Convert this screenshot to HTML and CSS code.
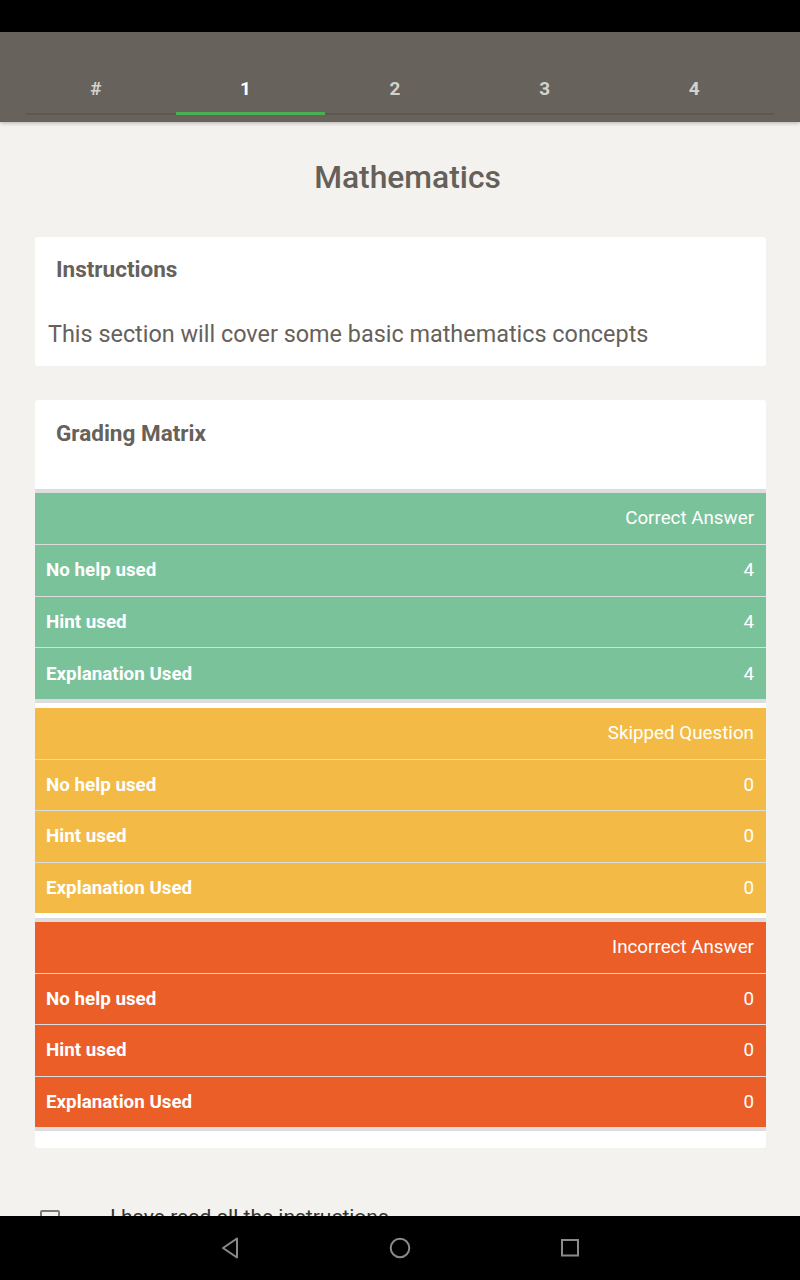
FILE: index.html
```html
<!DOCTYPE html>
<html>
<head>
<meta charset="utf-8">
<link rel="stylesheet" href="styles.css">
</head>
<body>
<div class="screen">
  <div class="statusbar"></div>
  <div class="header">
    <div class="tabs">
      <div class="tab"><span>#</span></div>
      <div class="tab active"><span>1</span></div>
      <div class="tab"><span>2</span></div>
      <div class="tab"><span>3</span></div>
      <div class="tab"><span>4</span></div>
    </div>
  </div>
  <div class="main">
    <h1 class="title">Mathematics</h1>
    <div class="card instructions">
      <h2 class="card-title">Instructions</h2>
      <p class="card-body">This section will cover some basic mathematics concepts</p>
    </div>
    <div class="card grading">
      <h2 class="card-title">Grading Matrix</h2>
      <div class="sep gray"></div>
      <div class="sec green">
        <div class="row head"><span class="val">Correct Answer</span></div>
        <div class="row"><span class="lbl">No help used</span><span class="val">4</span></div>
        <div class="row"><span class="lbl">Hint used</span><span class="val">4</span></div>
        <div class="row"><span class="lbl">Explanation Used</span><span class="val">4</span></div>
      </div>
      <div class="sep gray"></div>
      <div class="sep white"></div>
      <div class="sec yellow">
        <div class="row head"><span class="val">Skipped Question</span></div>
        <div class="row"><span class="lbl">No help used</span><span class="val">0</span></div>
        <div class="row"><span class="lbl">Hint used</span><span class="val">0</span></div>
        <div class="row"><span class="lbl">Explanation Used</span><span class="val">0</span></div>
      </div>
      <div class="sep white"></div>
      <div class="sep gray"></div>
      <div class="sec orange">
        <div class="row head"><span class="val">Incorrect Answer</span></div>
        <div class="row"><span class="lbl">No help used</span><span class="val">0</span></div>
        <div class="row"><span class="lbl">Hint used</span><span class="val">0</span></div>
        <div class="row"><span class="lbl">Explanation Used</span><span class="val">0</span></div>
      </div>
      <div class="sep gray"></div>
      <div class="card-foot"></div>
    </div>
    <label class="agree">
      <span class="box"></span>
      <span class="agree-text">I have read all the instructions</span>
    </label>
  </div>
  <div class="navbar">
    <svg class="nav-icon" width="20" height="22" viewBox="0 0 20 22"><path d="M17 1.5 L3 11 L17 20.5 Z" fill="none" stroke="#8a8a8a" stroke-width="2" stroke-linejoin="round"/></svg>
    <svg class="nav-icon" width="22" height="22" viewBox="0 0 22 22"><circle cx="11" cy="11" r="9.3" fill="none" stroke="#8a8a8a" stroke-width="2"/></svg>
    <svg class="nav-icon" width="20" height="20" viewBox="0 0 20 20"><rect x="2" y="2" width="16" height="15.5" fill="none" stroke="#8a8a8a" stroke-width="2"/></svg>
  </div>
</div>
</body>
</html>
```
FILE: styles.css
```css
* { box-sizing: border-box; }
html, body { margin: 0; padding: 0; }
body {
  font-family: Roboto, "Noto Sans", sans-serif;
  background: #000;
}
.screen {
  width: 800px;
  height: 1280px;
  display: flex;
  flex-direction: column;
  overflow: hidden;
  background: #f3f2ee;
}
.statusbar {
  height: 32px;
  flex: none;
  background: #000;
}
.header {
  height: 90px;
  flex: none;
  background: #67625b;
  padding: 15px 24px 0 26px;
  position: relative;
  z-index: 2;
  box-shadow: 0 1px 4px rgba(0,0,0,0.28);
}
.tabs {
  display: flex;
  height: 68px;
}
.tab {
  width: 149.6px;
  height: 68px;
  border-bottom: 2px solid #5c5851;
  display: flex;
  align-items: center;
  justify-content: center;
  padding-right: 10px;
  padding-top: 16px;
  font-size: 19px;
  font-weight: 700;
  color: #d5d2cd;
}
.tab.active {
  color: #ffffff;
  border-bottom: 3px solid #4caf50;
  padding-top: 17px;
}
.main {
  flex: 1;
  overflow: hidden;
  padding: 37px 34px 0 35px;
}
.title {
  margin: 0;
  text-align: center;
  font-size: 31.8px;
  line-height: 36px;
  font-weight: 500;
  color: #65605a;
  padding-left: 14px;
}
.card {
  background: #fff;
  border-radius: 3px;
}
.instructions {
  margin-top: 42px;
  padding: 20px 0 19px 0;
}
.card-title {
  margin: 0;
  padding-left: 21px;
  font-size: 22.5px;
  line-height: 24px;
  font-weight: 700;
  color: #66615b;
}
.card-body {
  margin: 40px 0 0 0;
  padding-left: 13px;
  font-size: 23.4px;
  line-height: 26px;
  color: #66615b;
}
.grading {
  margin-top: 34px;
  padding-top: 21px;
  overflow: hidden;
}
.grading .card-title {
  margin-bottom: 44px;
}
.sep { height: 4px; }
.sep.gray { background: #dddddd; }
.sep.white { height: 5px; background: #fff; }
.sec { display: flex; flex-direction: column; }
.green { background: #7ac29a; }
.yellow { background: #f3bb45; }
.orange { background: #eb5e28; }
.row {
  height: 51.33px;
  display: flex;
  align-items: center;
  justify-content: space-between;
  padding: 0 12px 0 11px;
  border-top: 1px solid #dcdcdc;
  color: #fff;
  font-size: 18.8px;
}
.row.head {
  height: 51px;
  border-top: none;
  justify-content: flex-end;
  padding-bottom: 1px;
}
.green .row:not(.head) { height: 51.67px; }
.lbl { font-weight: 700; }
.val { font-weight: 400; }
.card-foot { height: 17px; }
.agree {
  display: flex;
  align-items: flex-start;
  margin-top: 62px;
  padding-left: 5px;
}
.box {
  width: 20px;
  height: 20px;
  border: 2px solid #7a7a7a;
  border-radius: 2px;
  flex: none;
}
.agree-text {
  margin-left: 50px;
  font-size: 21px;
  line-height: 21px;
  color: #333;
  margin-top: -3px;
}
.navbar {
  height: 64px;
  flex: none;
  background: #000;
  display: flex;
  align-items: center;
  justify-content: center;
  gap: 149px;
}
```
